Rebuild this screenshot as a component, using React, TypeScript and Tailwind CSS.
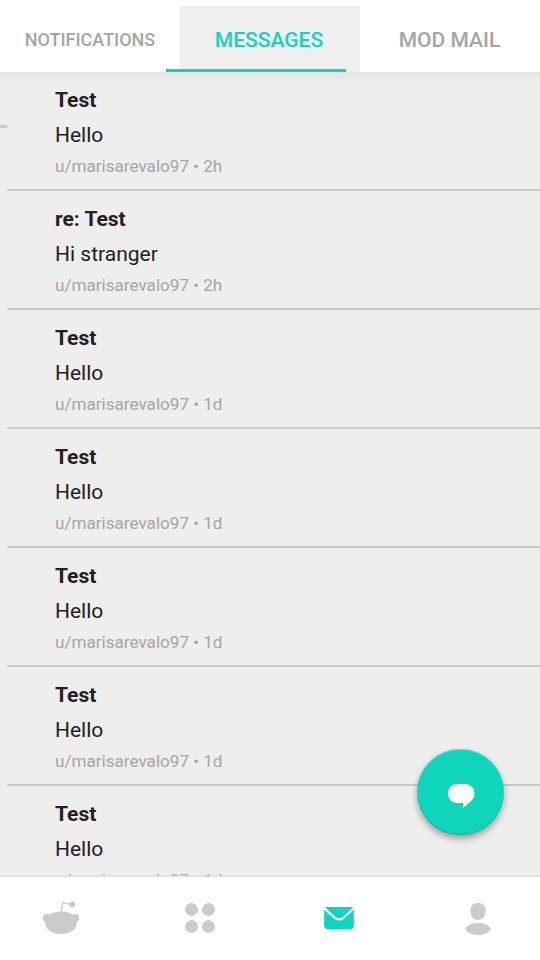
type Message = { subject: string; body: string; age: string };

const messages: Message[] = [
  { subject: "Test", body: "Hello", age: "2h" },
  { subject: "re: Test", body: "Hi stranger", age: "2h" },
  { subject: "Test", body: "Hello", age: "1d" },
  { subject: "Test", body: "Hello", age: "1d" },
  { subject: "Test", body: "Hello", age: "1d" },
  { subject: "Test", body: "Hello", age: "1d" },
  { subject: "Test", body: "Hello", age: "1d" },
];

function Tabs() {
  return (
    <header className="relative h-[72px] shrink-0 bg-white pt-1.5 font-medium text-[#a5a5a5]">
      <nav className="grid h-full grid-cols-3">
        <button className="flex items-center justify-center pt-0.5 text-[18px] leading-6">NOTIFICATIONS</button>
        <button className="flex items-center justify-center bg-[#efefef] pr-0.5 pt-0.5 text-[21px] leading-6 text-[#0fd5bd]">MESSAGES</button>
        <button className="flex items-center justify-center pr-px pt-0.5 text-[21px] leading-6">MOD MAIL</button>
      </nav>
      <div className="absolute bottom-0 left-[166px] h-[3px] w-[180px] bg-[#0fd5bd]" />
    </header>
  );
}

function MessageRow({ message }: { message: Message }) {
  return (
    <li className="ml-[7px] h-[119px] shrink-0 border-b-2 border-[#c9c9c8] pl-12 pt-3.5">
      <h2 className="text-[21px] font-bold leading-7 text-[#212121]">{message.subject}</h2>
      <p className="mt-[7px] text-[21px] leading-7 text-[#212121]">{message.body}</p>
      <p className="mt-[5px] text-[17.1px] leading-6 text-[#a5a5a4]">u/marisarevalo97 • {message.age}</p>
    </li>
  );
}

function BottomNav() {
  return (
    <nav className="flex h-[83px] shrink-0 justify-between bg-white px-[30px] pt-[13px] text-[#cbcbcb]">
      <svg className="h-[55px] w-[60px]" viewBox="0 0 60 55" fill="currentColor">
        <ellipse cx="31" cy="32.7" rx="15.8" ry="11.3" />
        <circle cx="16.8" cy="28" r="4" />
        <circle cx="45.2" cy="28" r="4" />
        <circle cx="42.3" cy="14.5" r="2.9" />
        <path d="M31.2 23L32.7 12.8L41 14.4" fill="none" stroke="currentColor" strokeWidth="1.4" />
      </svg>
      <svg className="h-[55px] w-[60px]" viewBox="0 0 60 55" fill="currentColor">
        <circle cx="21.5" cy="19.5" r="6.4" />
        <circle cx="38.5" cy="19.5" r="6.4" />
        <circle cx="21.5" cy="36.5" r="6.4" />
        <circle cx="38.5" cy="36.5" r="6.4" />
      </svg>
      <svg className="h-[55px] w-[60px] text-[#0fd5bd]" viewBox="0 0 60 55" fill="currentColor">
        <path d="M17 17H41Q42.2 17 43 17.8L33.2 26.6Q29 30 24.8 26.6L15.7 17.8Q16 17 17 17Z" />
        <path d="M14.2 19.7L23.5 28.2Q29 33 34.5 28.2L43.8 19.7V35.5Q43.8 39 40.3 39H17.7Q14.2 39 14.2 35.5Z" />
      </svg>
      <svg className="h-[55px] w-[60px]" viewBox="0 0 60 55" fill="currentColor">
        <path d="M28 13C33 13 35.6 16.2 35.6 20.5C35.6 26 32.5 30 28 30S20.4 26 20.4 20.5C20.4 16.2 23 13 28 13Z" />
        <path d="M15 39C20.5 30.7 35.5 30.7 41 39C35.5 47.2 20.5 47.2 15 39Z" />
      </svg>
    </nav>
  );
}

export default function App() {
  return (
    <div className="relative flex h-[960px] w-[540px] flex-col overflow-hidden bg-white font-['Roboto','Liberation_Sans',sans-serif]">
      <Tabs />
      <main className="relative h-[805px] shrink-0 overflow-hidden bg-[#eeeeed]">
        <div className="absolute inset-x-0 top-0 h-[11px] bg-linear-to-b from-[#e4e4e3] to-[#eeeeed]" />
        <div className="absolute left-0 top-[53px] h-[3px] w-[7px] bg-[#c9c9c8]" />
        <ul className="relative flex flex-col">
          {messages.map((message, i) => (
            <MessageRow key={i} message={message} />
          ))}
        </ul>
        <div className="absolute inset-x-0 bottom-0 h-[3px] bg-linear-to-b from-transparent to-[#dededd]" />
        <button
          aria-label="New message"
          className="absolute left-[417px] top-[677px] flex h-[86px] w-[87px] items-center justify-center rounded-full bg-[#0fd5bd] shadow-[0_4px_7px_rgba(0,0,0,0.34),inset_0_-1px_1px_rgba(0,0,0,0.16),inset_0_1px_1px_rgba(255,255,255,0.25)]"
        >
          <svg className="mt-[7px] h-[26px] w-[28px]" viewBox="0 0 28 26" fill="white">
            <path d="M10 1H18C23.5 1 27.5 5 27.5 10.5C27.5 14 26 16.4 23.8 18.3L16 25.3V20H10C4.6 20 1 16 1 10.5S4.6 1 10 1Z" />
          </svg>
        </button>
      </main>
      <BottomNav />
    </div>
  );
}
